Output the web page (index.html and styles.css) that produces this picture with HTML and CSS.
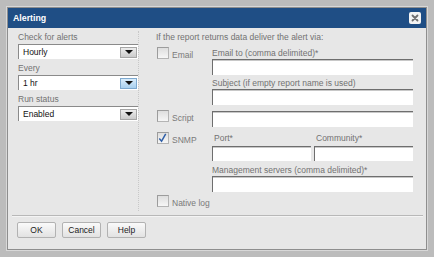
FILE: index.html
```html
<!DOCTYPE html>
<html lang="en">
<head>
  <meta charset="UTF-8">
  <title>Alerting</title>
  <link rel="stylesheet" href="styles.css">
</head>
<body>
  <div class="dialog">

    <!-- Title bar -->
    <div class="titlebar">
      <span class="title">Alerting</span>
      <span class="close">
        <svg viewBox="0 0 12 12" width="12" height="12">
          <path d="M3.5 3.5l5 5M8.5 3.5l-5 5" stroke="#6f6f6f" stroke-width="1.8" stroke-linecap="round"/>
        </svg>
      </span>
    </div>

    <div class="columns">

      <!-- Schedule settings -->
      <div class="schedule">
        <div class="field-label">Check for alerts</div>
        <div class="select"><span>Hourly</span><span class="arrow"></span></div>

        <div class="field-label">Every</div>
        <div class="select"><span>1 hr</span><span class="arrow arrow--hover"></span></div>

        <div class="field-label">Run status</div>
        <div class="select"><span>Enabled</span><span class="arrow"></span></div>
      </div>

      <!-- Delivery options -->
      <div class="delivery">
        <div class="intro">If the report returns data deliver the alert via:</div>

        <div class="option option--email">
          <div class="check"><span class="box"></span><span class="check-label">Email</span></div>
          <div class="fields">
            <div class="field-label">Email to (comma delimited)*</div>
            <div class="input"></div>
            <div class="field-label field-label--gap">Subject (if empty report name is used)</div>
            <div class="input"></div>
          </div>
        </div>

        <div class="option option--script">
          <div class="check"><span class="box"></span><span class="check-label">Script</span></div>
          <div class="fields">
            <div class="input input--top"></div>
          </div>
        </div>

        <div class="option option--snmp">
          <div class="check"><span class="box box--checked">
            <svg viewBox="0 0 12 12" width="12" height="12">
              <path d="M2.5 6.5l2.5 3 4.5-8" stroke="#2f5fa8" stroke-width="1.6" fill="none"/>
            </svg>
          </span><span class="check-label">SNMP</span></div>
          <div class="fields">
            <div class="pair">
              <div class="pair-item">
                <div class="field-label">Port*</div>
                <div class="input input--short"></div>
              </div>
              <div class="pair-item">
                <div class="field-label">Community*</div>
                <div class="input input--short"></div>
              </div>
            </div>
            <div class="field-label field-label--gap3">Management servers (comma delimited)*</div>
            <div class="input"></div>
          </div>
        </div>

        <div class="option option--native">
          <div class="check"><span class="box"></span><span class="check-label">Native log</span></div>
        </div>
      </div>

    </div>

    <div class="separator"></div>

    <div class="buttons">
      <button class="btn">OK</button>
      <button class="btn">Cancel</button>
      <button class="btn">Help</button>
    </div>

  </div>
</body>
</html>
```

FILE: styles.css
```css
html, body {
  margin: 0;
  padding: 0;
}

body {
  background: #bcbcbc;
  font-family: "Liberation Sans", Arial, sans-serif;
  font-size: 8.5px;
  color: #727272;
  padding: 7px 7px 0 7px;
  height: 257px;
  box-sizing: border-box;
}

.dialog {
  width: 420px;
  height: 243px;
  box-sizing: border-box;
  border: 1px solid #8e8e8e;
  background: #e7e7e7;
  box-shadow: 0 0 0 1px #d8d8d8;
}

/* Blue title bar */
.titlebar {
  height: 20px;
  background: #1f4e85;
  display: flex;
  align-items: center;
  justify-content: space-between;
  padding: 0 5px 0 5px;
}
.title {
  color: #fff;
  font-weight: bold;
  font-size: 8.8px;
}
.close {
  width: 12px;
  height: 12px;
  background: #f4f4f4;
  border-radius: 2px;
  display: flex;
}

.columns {
  display: flex;
  padding-top: 3px;
}

/* Left column */
.schedule {
  width: 120px;
  padding-left: 10px;
  margin-right: 9px;
  border-right: 1px dotted #c8c8c8;
}
.schedule .field-label {
  margin-top: 3px;
}
.schedule .field-label:first-child {
  margin-top: 0;
}

.field-label {
  line-height: 12px;
  height: 12px;
  white-space: nowrap;
}
.field-label--gap {
  margin-top: 2px;
}
.field-label--gap3 {
  margin-top: 3px;
}

.select {
  margin-top: 1px;
  height: 15px;
  box-sizing: border-box;
  background: #fff;
  border-top: 1px solid #8a8a8a;
  border-left: 1px solid #8a8a8a;
  display: flex;
  align-items: center;
  justify-content: space-between;
  padding-left: 4px;
  padding-right: 1px;
  color: #111;
}
.arrow {
  width: 17px;
  height: 11px;
  box-sizing: border-box;
  border: 1px solid #a6a6a6;
  background: linear-gradient(#ececec, #cbcbcb);
  display: flex;
  align-items: center;
  justify-content: center;
}
.arrow::after {
  content: "";
  border-left: 4px solid transparent;
  border-right: 4px solid transparent;
  border-top: 4px solid #111;
}
.arrow--hover {
  background: linear-gradient(#d9ecfb, #a9d0ee);
  border-color: #7ea9cf;
}

/* Right column */
.delivery {
  padding-left: 8px;
  width: 258px;
  padding-bottom: 4px;
}
.intro {
  line-height: 12px;
  margin-bottom: 4px;
}

.option {
  display: flex;
}
.option--script {
  margin-top: 5px;
}
.option--snmp {
  margin-top: 5px;
}
.option--native {
  margin-top: 3px;
}

.check {
  width: 56px;
  display: flex;
  align-items: flex-end;
  height: 12px;
  padding-left: 1px;
  box-sizing: border-box;
}
.box {
  width: 12px;
  height: 12px;
  box-sizing: border-box;
  border: 1px solid #b4b4b4;
  border-top-color: #9c9c9c;
  border-left-color: #9c9c9c;
  background: linear-gradient(#dedede, #f6f6f6);
  display: flex;
  margin-top: -1px;
}
.box svg {
  margin: -1px 0 0 -1px;
}
.check-label {
  margin-left: 3px;
  line-height: 11px;
  margin-bottom: -2px;
  white-space: nowrap;
  color: #7a7a7a;
}

.fields {
  width: 201px;
}
.input {
  height: 16px;
  box-sizing: border-box;
  background: #fff;
  border-top: 1px solid #6e6e6e;
  border-left: 1px solid #6e6e6e;
  box-shadow: inset 0 1px 0 #c8c8c8;
}
.input--top {
  margin-top: 1px;
}
.input--short {
  height: 15px;
  margin-top: 2px;
}

.pair {
  display: flex;
  gap: 3px;
}
.pair-item {
  flex: 1;
}
.pair-item .field-label {
  padding-left: 2px;
}

.separator {
  margin: 4px 3px 0 4px;
  border-top: 1px solid #b8b8b8;
  border-bottom: 1px solid #f4f4f4;
}

.buttons {
  display: flex;
  gap: 6px;
  padding: 5px 0 0 9px;
}
.btn {
  width: 39px;
  height: 16px;
  padding: 0;
  font-family: "Liberation Sans", Arial, sans-serif;
  font-size: 8.5px;
  color: #222;
  border: 1px solid #b2b2b2;
  border-radius: 2px;
  background: linear-gradient(#fafafa, #e2e2e2);
}
```
